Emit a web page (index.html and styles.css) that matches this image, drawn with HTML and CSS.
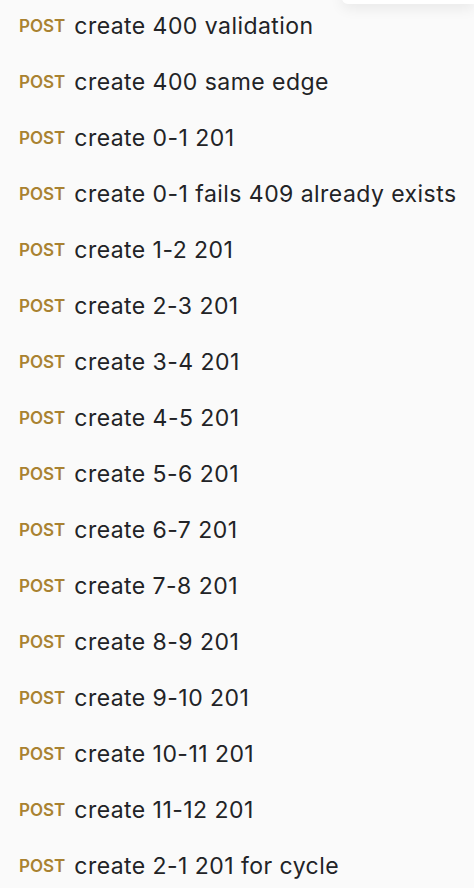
FILE: index.html
```html
<!DOCTYPE html>
<html>
<head>
<meta charset="utf-8">
<link rel="stylesheet" href="styles.css">
</head>
<body>
<div class="popup"></div>
<ul class="list">
  <li class="row"><span class="method">POST</span><span class="name">create 400 validation</span></li>
  <li class="row"><span class="method">POST</span><span class="name">create 400 same edge</span></li>
  <li class="row"><span class="method">POST</span><span class="name">create 0-1 201</span></li>
  <li class="row"><span class="method">POST</span><span class="name">create 0-1 fails 409 already exists</span></li>
  <li class="row"><span class="method">POST</span><span class="name">create 1-2 201</span></li>
  <li class="row"><span class="method">POST</span><span class="name">create 2-3 201</span></li>
  <li class="row"><span class="method">POST</span><span class="name">create 3-4 201</span></li>
  <li class="row"><span class="method">POST</span><span class="name">create 4-5 201</span></li>
  <li class="row"><span class="method">POST</span><span class="name">create 5-6 201</span></li>
  <li class="row"><span class="method">POST</span><span class="name">create 6-7 201</span></li>
  <li class="row"><span class="method">POST</span><span class="name">create 7-8 201</span></li>
  <li class="row"><span class="method">POST</span><span class="name">create 8-9 201</span></li>
  <li class="row"><span class="method">POST</span><span class="name">create 9-10 201</span></li>
  <li class="row"><span class="method">POST</span><span class="name">create 10-11 201</span></li>
  <li class="row"><span class="method">POST</span><span class="name">create 11-12 201</span></li>
  <li class="row"><span class="method">POST</span><span class="name">create 2-1 201 for cycle</span></li>
</ul>
</body>
</html>
```
FILE: styles.css
```css
html, body {
  margin: 0;
  padding: 0;
  background: #fafafa;
  font-family: Inter, "Noto Sans", sans-serif;
  overflow: hidden;
}
.popup {
  position: absolute;
  top: -10px;
  right: 0;
  width: 132px;
  height: 14px;
  background: #fff;
  border-radius: 0 0 0 6px;
  box-shadow: 0 4px 14px rgba(0,0,0,0.08);
}
.list {
  list-style: none;
  margin: -2px 0 0 0;
  padding: 0 0 0 19px;
}
.row {
  height: 56px;
  display: flex;
  align-items: center;
  gap: 9px;
}
.method {
  font-size: 17px;
  font-weight: 600;
  color: #a98231;
  line-height: 1;
}
.name {
  font-size: 23px;
  letter-spacing: 0.45px;
  color: #222326;
  line-height: 1;
}
```
